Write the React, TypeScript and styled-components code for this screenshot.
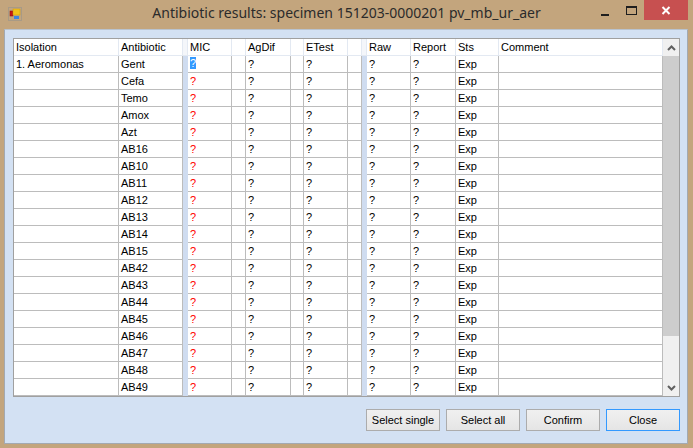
import React from 'react';
import styled, { createGlobalStyle } from 'styled-components';

const GlobalStyle = createGlobalStyle`
  html, body {
    margin: 0;
    padding: 0;
    background: #c3a57d;
  }
`;

const Window = styled.div`
  width: 693px;
  height: 448px;
  background: #c3a57d;
  display: flex;
  flex-direction: column;
  font-family: 'Liberation Sans', Arial, sans-serif;
  font-size: 11px;
  color: #000;
  overflow: hidden;
`;

const TitleBar = styled.div`
  height: 29px;
  display: flex;
  align-items: flex-start;
  justify-content: space-between;
  position: relative;
`;

const AppIcon = styled.svg`
  margin: 7px 0 0 8px;
  flex-shrink: 0;
`;

const Title = styled.div`
  position: absolute;
  left: 0;
  right: 0;
  top: 0;
  text-align: center;
  font-family: 'Noto Sans', 'Open Sans', sans-serif;
  font-size: 14px;
  line-height: 25px;
  color: #2b2b2b;
  pointer-events: none;
`;

const Controls = styled.div`
  display: flex;
  align-items: flex-start;
  margin-right: 5px;
`;

const CtlButton = styled.div<{ $close?: boolean }>`
  width: ${(p) => (p.$close ? 44 : 26)}px;
  height: 20px;
  display: flex;
  align-items: center;
  justify-content: center;
  background: ${(p) => (p.$close ? '#c75050' : 'transparent')};
`;

const Client = styled.div`
  flex: 1;
  margin: 0 5px 4px 4px;
  background: #d3e1f3;
  border: 1px solid #a3a9b1;
  border-top-color: #b9c3cf;
  padding: 8px 7px 0 8px;
  display: flex;
  flex-direction: column;
`;

const Grid = styled.div`
  width: 665px;
  height: 357px;
  border: 1px solid #a0a0a0;
  background: #fff;
  display: flex;
`;

const Table = styled.div`
  width: 649px;
  display: flex;
  flex-direction: column;
`;

const Row = styled.div`
  display: flex;
  height: 17px;
`;

const HeadCell = styled.div<{ $w: number; $band?: boolean }>`
  width: ${(p) => p.$w}px;
  flex-shrink: 0;
  box-sizing: border-box;
  height: 17px;
  line-height: 16px;
  padding-left: 2px;
  border-right: 1px solid #e3e9f2;
  border-bottom: 1px solid #e3e9f2;
  background: ${(p) => (p.$band ? '#f4f6fa' : '#fff')};
  white-space: nowrap;
  overflow: hidden;
`;

const Cell = styled.div<{ $w: number; $red?: boolean }>`
  width: ${(p) => p.$w}px;
  flex-shrink: 0;
  box-sizing: border-box;
  height: 17px;
  line-height: 16px;
  padding-left: 2px;
  border-right: 1px solid #bcbcbc;
  border-bottom: 1px solid #bcbcbc;
  color: ${(p) => (p.$red ? '#ff0000' : '#000')};
  white-space: nowrap;
  overflow: hidden;
  position: relative;
`;

const Band = styled.div`
  width: 5px;
  flex-shrink: 0;
  height: 17px;
  background: #cfdcf0;
`;

const EditBox = styled.div`
  position: absolute;
  left: -1px;
  top: -1px;
  right: -1px;
  bottom: -1px;
  border: 1px solid #000;
  padding-left: 2px;
  line-height: 15px;
  background: #fff;
`;

const Selected = styled.span`
  background: #3399ff;
  color: #fff;
`;

const ScrollBar = styled.div`
  width: 16px;
  display: flex;
  flex-direction: column;
  background: #f0f0f0;
`;

const ScrollArrow = styled.div`
  height: 17px;
  display: flex;
  align-items: center;
  justify-content: center;
`;

const Thumb = styled.div`
  height: 280px;
  background: #cdcdcd;
`;

const Track = styled.div`
  flex: 1;
`;

const ButtonRow = styled.div`
  display: flex;
  justify-content: flex-end;
  gap: 6px;
  margin-top: 12px;
`;

const Button = styled.div<{ $focused?: boolean }>`
  width: 74px;
  height: 22px;
  box-sizing: border-box;
  border: 1px solid ${(p) => (p.$focused ? '#3399ff' : '#acacac')};
  background: linear-gradient(#f0f0f0, #e5e5e5);
  display: flex;
  align-items: center;
  justify-content: center;
  font-size: 11px;
`;

type Col = { label: string; w: number; kind: 'iso' | 'ab' | 'mic' | 'q' | 'blank' | 'sts' | 'comment' | 'band' };

const columns: Col[] = [
  { label: 'Isolation', w: 105, kind: 'iso' },
  { label: 'Antibiotic', w: 64, kind: 'ab' },
  { label: '', w: 5, kind: 'band' },
  { label: 'MIC', w: 44, kind: 'mic' },
  { label: '', w: 14, kind: 'blank' },
  { label: 'AgDif', w: 45, kind: 'q' },
  { label: '', w: 13, kind: 'blank' },
  { label: 'ETest', w: 44, kind: 'q' },
  { label: '', w: 14, kind: 'blank' },
  { label: '', w: 5, kind: 'band' },
  { label: 'Raw', w: 44, kind: 'q' },
  { label: 'Report', w: 45, kind: 'q' },
  { label: 'Sts', w: 43, kind: 'sts' },
  { label: 'Comment', w: 164, kind: 'comment' },
];

const antibiotics = [
  'Gent', 'Cefa', 'Temo', 'Amox', 'Azt', 'AB16', 'AB10', 'AB11', 'AB12', 'AB13',
  'AB14', 'AB15', 'AB42', 'AB43', 'AB44', 'AB45', 'AB46', 'AB47', 'AB48', 'AB49',
];

const Chevron = ({ up }: { up?: boolean }) => (
  <svg width="9" height="6" viewBox="0 0 9 6">
    <polyline
      points={up ? '1,5 4.5,1.5 8,5' : '1,1 4.5,4.5 8,1'}
      fill="none"
      stroke="#606060"
      strokeWidth="2"
    />
  </svg>
);

export default function App() {
  return (
    <Window>
      <GlobalStyle />
      <TitleBar>
        <AppIcon width="14" height="14" viewBox="0 0 14 14">
          <rect x="0.5" y="0.5" width="13" height="13" fill="none" stroke="#a89a86" />
          <rect x="2" y="4" width="3" height="5" fill="#c81818" stroke="#8a1010" strokeWidth="0.5" />
          <rect x="5" y="2" width="7" height="6" fill="#f3c21a" stroke="#c99a0a" strokeWidth="0.5" />
          <rect x="6" y="9" width="5" height="3" fill="#3d86e0" />
        </AppIcon>
        <Title>Antibiotic results: specimen 151203-0000201 pv_mb_ur_aer</Title>
        <Controls>
          <CtlButton>
            <svg width="10" height="12" viewBox="0 0 10 12">
              <rect x="1" y="10" width="8" height="2" fill="#1e1e1e" />
            </svg>
          </CtlButton>
          <CtlButton>
            <svg width="11" height="9" viewBox="0 0 11 9">
              <rect x="0.5" y="0.5" width="10" height="8" fill="none" stroke="#1e1e1e" strokeWidth="1" />
              <rect x="0" y="0" width="11" height="2" fill="#1e1e1e" />
            </svg>
          </CtlButton>
          <CtlButton $close>
            <svg width="10" height="9" viewBox="0 0 10 9">
              <path d="M1.5 1 L8.5 8 M8.5 1 L1.5 8" stroke="#fff" strokeWidth="2" />
            </svg>
          </CtlButton>
        </Controls>
      </TitleBar>
      <Client>
        <Grid>
          <Table>
            <Row>
              {columns.map((c, i) => (
                <HeadCell key={i} $w={c.w} $band={c.kind === 'band'}>
                  {c.label}
                </HeadCell>
              ))}
            </Row>
            {antibiotics.map((ab, r) => (
              <Row key={ab}>
                {columns.map((c, i) => {
                  if (c.kind === 'band') return <Band key={i} />;
                  if (c.kind === 'iso')
                    return (
                      <Cell key={i} $w={c.w}>
                        {r === 0 ? '1. Aeromonas' : ''}
                      </Cell>
                    );
                  if (c.kind === 'ab')
                    return (
                      <Cell key={i} $w={c.w}>
                        {ab}
                      </Cell>
                    );
                  if (c.kind === 'mic')
                    return (
                      <Cell key={i} $w={c.w} $red>
                        {r === 0 ? (
                          <EditBox>
                            <Selected>?</Selected>
                          </EditBox>
                        ) : (
                          '?'
                        )}
                      </Cell>
                    );
                  if (c.kind === 'q')
                    return (
                      <Cell key={i} $w={c.w}>
                        ?
                      </Cell>
                    );
                  if (c.kind === 'sts')
                    return (
                      <Cell key={i} $w={c.w}>
                        Exp
                      </Cell>
                    );
                  return <Cell key={i} $w={c.w} />;
                })}
              </Row>
            ))}
          </Table>
          <ScrollBar>
            <ScrollArrow>
              <Chevron up />
            </ScrollArrow>
            <Thumb />
            <Track />
            <ScrollArrow>
              <Chevron />
            </ScrollArrow>
          </ScrollBar>
        </Grid>
        <ButtonRow>
          <Button>Select single</Button>
          <Button>Select all</Button>
          <Button>Confirm</Button>
          <Button $focused>Close</Button>
        </ButtonRow>
      </Client>
    </Window>
  );
}
